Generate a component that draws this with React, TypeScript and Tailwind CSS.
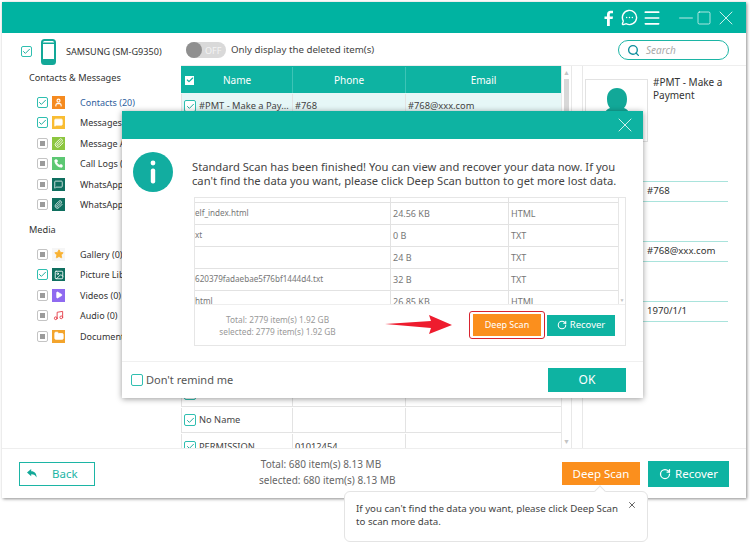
import React from "react";
import { Check, Folder, Image, Menu, MessageCircleMore, MessageSquare, Minus, Music, Paperclip, Phone, Play, RotateCw, Search, Square, Star, User, X } from "lucide-react";

const CheckBox = ({ state, size = "small" }: { state: "on" | "mixed" | "off"; size?: "small" | "large" }) => {
  const box = size === "large" ? "size-[12px]" : "size-[11px]";
  if (state === "on") {
    return (
      <span className={`${box} shrink-0 flex items-center justify-center rounded-[2px] border border-[#2fbfb0] bg-white`}>
        <Check size={9} strokeWidth={2.5} className="text-[#14a898]" />
      </span>
    );
  }
  if (state === "mixed") {
    return (
      <span className={`${box} shrink-0 flex items-center justify-center rounded-[2px] border border-[#c4c4c4] bg-white`}>
        <span className="size-[5px] bg-[#9b9b9b]" />
      </span>
    );
  }
  return <span className={`${box} shrink-0 rounded-[2px] border border-[#2fbfb0] bg-white`} />;
};

const contactItems = [
  { label: "Contacts (20)", state: "on", bg: "bg-[#f58a1f]", icon: <User size={9} strokeWidth={3} className="text-white" />, active: true },
  { label: "Messages (0)", state: "on", bg: "bg-[#f9bd33]", icon: <MessageSquare size={9} fill="white" className="text-white" /> },
  { label: "Message Attachments", state: "mixed", bg: "bg-[#8cc63f]", icon: <Paperclip size={10} className="text-white" /> },
  { label: "Call Logs (0)", state: "mixed", bg: "bg-[#5cc873]", icon: <Phone size={9} fill="white" className="text-white" /> },
  { label: "WhatsApp (0)", state: "mixed", bg: "bg-[#0f6f5f]", icon: <MessageSquare size={9} className="text-white" /> },
  { label: "WhatsApp Attachments", state: "mixed", bg: "bg-[#0f6f5f]", icon: <Paperclip size={9} className="text-white" /> },
] as const;

const mediaItems = [
  { label: "Gallery (0)", state: "mixed", bg: "bg-[#f6f6f6]", icon: <Star size={10} fill="#f9b233" className="text-[#f9b233]" /> },
  { label: "Picture Library", state: "on", bg: "bg-[#0f6f5f]", icon: <Image size={10} className="text-white" /> },
  { label: "Videos (0)", state: "mixed", bg: "bg-[#8f6af0]", icon: <Play size={8} fill="white" className="text-white" /> },
  { label: "Audio (0)", state: "mixed", bg: "bg-white", icon: <Music size={11} className="text-[#e5404a]" /> },
  { label: "Documents (0)", state: "mixed", bg: "bg-[#f3a42c]", icon: <Folder size={10} fill="white" className="text-white" /> },
] as const;

const SideRow = ({ item }: { item: { label: string; state: "on" | "mixed"; bg: string; icon: React.ReactNode; active?: boolean } }) => (
  <div className="flex h-[20.5px] items-center">
    <div className="flex w-[15px] shrink-0"><CheckBox state={item.state} /></div>
    <div className={`flex size-[13px] shrink-0 items-center justify-center ${item.bg}`}>{item.icon}</div>
    <span className={`ml-[15px] whitespace-nowrap text-[9px] ${item.active ? "text-[#2f5f9e]" : "text-[#333]"}`}>{item.label}</span>
  </div>
);

const contactRows = [
  { name: "#PMT - Make a Pay...", phone: "#768", email: "#768@xxx.com", selected: true },
  ...Array.from({ length: 10 }, () => ({ name: "", phone: "", email: "", selected: false })),
  { name: "", phone: "(...)", email: "", selected: false },
  { name: "No Name", phone: "", email: "", selected: false },
  { name: "PERMISSION", phone: "01012454", email: "", selected: false },
];

const fileRows = [
  { name: "", size: "", type: "", height: "h-[6px]" },
  { name: "elf_index.html", size: "24.56 KB", type: "HTML", height: "h-[22px]" },
  { name: "xt", size: "0 B", type: "TXT", height: "h-[22px]" },
  { name: "", size: "24 B", type: "TXT", height: "h-[22px]" },
  { name: "620379fadaebae5f76bf1444d4.txt", size: "32 B", type: "TXT", height: "h-[22px]" },
  { name: "html", size: "26.85 KB", type: "HTML", height: "h-[22px]" },
];

const fieldRows = ["#768", "#768@xxx.com", "1970/1/1"];

export default function App() {
  return (
    <div className="relative h-[545px] w-[750px] overflow-hidden bg-white font-['Noto_Sans',sans-serif] text-[#333]">
      <div className="ml-[2px] mt-[2px] flex h-[496px] w-[744px] flex-col bg-white shadow-[1px_1px_3px_rgba(0,0,0,0.45)]">
        <div className="flex h-[31px] shrink-0 items-center justify-end bg-[#00b3a1] pr-[8px] text-white">
          <svg width="10" height="16" viewBox="0 0 10 16" className="mr-[7px]">
            <path d="M3 16V9H0.5V6.5H3V4.5C3 2 4.5 0.8 6.5 0.8H9V3.2H7.2C6.2 3.2 5.8 3.7 5.8 4.6V6.5H9L8.6 9H5.8V16Z" fill="white" />
          </svg>
          <MessageCircleMore size={17} className="mr-[4px]" />
          <Menu size={20} className="mr-[13px]" />
          <Minus size={22} strokeWidth={0.8} className="mr-[-1px]" />
          <Square size={16} strokeWidth={1} className="mr-[2px]" />
          <X size={24} strokeWidth={0.8} />
        </div>

        <div className="flex min-h-0 flex-1">
          <aside className="w-[179px] shrink-0">
            <div className="flex h-[33px] items-center pl-[19px] pt-[4px]">
              <CheckBox state="on" />
              <svg width="15" height="26" viewBox="0 0 15 26" className="ml-[9px]">
                <rect x="1" y="1" width="13" height="24" rx="2.5" fill="none" stroke="#12a898" strokeWidth="2" />
                <rect x="1" y="3.5" width="13" height="1.5" fill="#12a898" />
                <rect x="1" y="20" width="13" height="5" rx="1.5" fill="#12a898" />
              </svg>
              <span className="ml-[10px] whitespace-nowrap text-[9.1px] text-[#333]">SAMSUNG (SM-G9350)</span>
            </div>
            <div className="pl-[27px] pt-[4px] text-[9.2px] leading-[16px]">Contacts &amp; Messages</div>
            <div className="pl-[35px] pt-[6px]">
              {contactItems.map((item) => <SideRow key={item.label} item={item} />)}
            </div>
            <div className="pl-[27px] pt-[7px] text-[9.2px] leading-[16px]">Media</div>
            <div className="pl-[35px] pt-[6px]">
              {mediaItems.map((item) => <SideRow key={item.label} item={item} />)}
            </div>
          </aside>

          <div className="flex min-w-0 flex-1 flex-col">
            <div className="flex h-[33px] shrink-0 items-center border-b border-[#eeeeee] pl-[5px] pr-[17px] pt-[2px]">
              <div className="flex h-[16px] w-[40px] items-center rounded-full bg-[#d9d9d9]">
                <span className="size-[16px] rounded-full bg-[#8f8f8f]" />
                <span className="ml-[3px] text-[9px] leading-none text-[#f4f4f4]">OFF</span>
              </div>
              <span className="ml-[5px] text-[9.7px] text-[#444]">Only display the deleted item(s)</span>
              <div className="ml-auto flex h-[20px] w-[111px] items-center rounded-full border border-[#1cb5a5] pl-[8px]">
                <Search size={13} strokeWidth={2.5} className="text-[#0d8f9c]" />
                <span className="ml-[6px] text-[10px] italic text-[#aaa]">Search</span>
              </div>
            </div>

            <div className="flex min-h-0 flex-1">
              <div className="flex w-[380px] shrink-0 flex-col overflow-hidden">
                <div className="flex h-[27px] shrink-0 bg-[#0eb3a2] pt-[1px] text-[10px] text-white">
                  <div className="flex w-[112px] items-center border-r border-[#3dc4b6] pl-[4px]">
                    <span className="flex size-[9px] items-center justify-center bg-white"><Check size={8} strokeWidth={3.5} className="text-[#0eb3a2]" /></span>
                    <span className="ml-[29px]">Name</span>
                  </div>
                  <div className="flex w-[113px] items-center justify-center border-r border-[#3dc4b6]">Phone</div>
                  <div className="flex flex-1 items-center justify-center">Email</div>
                </div>
                {contactRows.map((row, i) => (
                  <div key={i} className={`flex h-[26.2px] shrink-0 border-b border-[#e3e3e3] pt-[1px] text-[9.3px] text-[#444] ${row.selected ? "bg-[#e6f7f7]" : "bg-white"}`}>
                    <div className="flex w-[112px] items-center border-r border-l border-[#e3e3e3] pl-[2px]">
                      <CheckBox state="on" size="large" />
                      <span className="ml-[3px] whitespace-nowrap">{row.name}</span>
                    </div>
                    <div className="flex w-[113px] items-center border-r border-[#e3e3e3] pl-[2px]">{row.phone}</div>
                    <div className="flex flex-1 items-center pl-[2px]">{row.email}</div>
                  </div>
                ))}
              </div>

              <div className="flex w-[11px] shrink-0 flex-col items-center border-x border-[#e8e8e8] text-[#c4c4c4]">
                <span className="mt-[3px] text-[7px] leading-none">▲</span>
                <span className="mt-[3px] h-[50px] w-[5px] bg-[#d8d8d8]" />
                <span className="mb-[3px] mt-auto text-[7px] leading-none">▼</span>
              </div>
              <div className="w-[11px] shrink-0 border-r border-[#e8e8e8]" />

              <div className="min-w-0 flex-1 pl-[2px] pr-[18px] pt-[13px]">
                <div className="flex">
                  <div className="flex size-[63px] shrink-0 justify-center border border-[#e2e2e2] pt-[6px]">
                    <svg width="28" height="40" viewBox="0 0 28 40"><path d="M14 2c6 0 10 4 10 11 0 4-1 7-3 9 3 1 5 3 5 6 0 3-5 6-12 6S2 31 2 28c0-3 2-5 5-6-2-2-3-5-3-9C4 6 8 2 14 2z" fill="#12a898" /></svg>
                  </div>
                  <div className="ml-[5px] mt-[-3px] text-[10px] leading-[13px]">#PMT - Make a Payment</div>
                </div>
                <div className="pt-[39px]">
                  {fieldRows.map((value, i) => (
                    <div key={i} className={`flex h-[21px] items-center border-y border-[#a9e3dc] pl-[62px] text-[9.6px] ${i === 0 ? "" : "mt-[39px]"}`}>{value}</div>
                  ))}
                </div>
              </div>
            </div>
          </div>
        </div>

        <div className="flex h-[50px] shrink-0 items-center border-t border-[#eeeeee] pl-[17px] pr-[17px]">
          <div className="flex h-[24px] w-[76px] items-center border border-[#1cb5a5] pl-[7px] text-[11.5px] text-[#1cb5a5]">
            <svg width="10" height="9" viewBox="0 0 10 9"><path d="M0 3.5 L4.2 0 V2.2 C7.8 2.2 9.6 4.6 9.6 8.6 C8.6 6.4 7 5.2 4.2 5.2 V7.2 Z" fill="#12a898" /></svg>
            <span className="ml-[15px]">Back</span>
          </div>
          <div className="mb-[4px] ml-[164px] w-[124px] text-center text-[10px] leading-[16px] whitespace-nowrap text-[#666]">
            <div>Total: 680 item(s) 8.13 MB</div>
            <div>selected: 680 item(s) 8.13 MB</div>
          </div>
          <div className="ml-auto flex h-[23px] w-[78px] items-center justify-center bg-[#fb8f1d] text-[11.5px] text-white">Deep Scan</div>
          <div className="ml-[8px] flex h-[26px] w-[81px] items-center justify-center gap-[4px] bg-[#0eb3a2] text-[11.5px] text-white">
            <RotateCw size={12} strokeWidth={2.5} />
            Recover
          </div>
        </div>
      </div>

      <div className="absolute left-[122px] top-[111px] flex h-[287px] w-[521px] flex-col bg-white shadow-[0_1px_6px_rgba(0,0,0,0.4)]">
        <div className="flex h-[28px] shrink-0 items-center justify-end bg-[#0eb3a2] pr-[6px] text-white">
          <X size={24} strokeWidth={0.8} />
        </div>
        <div className="flex min-h-0 flex-1 flex-col border-b border-[#f0f0f0]">
          <div className="flex h-[58px] shrink-0">
            <div className="ml-[11px] mt-[13px] flex size-[40px] shrink-0 items-center justify-center rounded-full bg-[#12ada0]">
              <svg width="6" height="24" viewBox="0 0 6 24"><circle cx="3" cy="3" r="2.4" fill="white" /><rect x="0.8" y="8.5" width="4.4" height="15" rx="2" fill="white" /></svg>
            </div>
            <p className="ml-[19px] mt-[21px] w-[440px] whitespace-nowrap text-[11.2px] leading-[14px] text-[#444]">
              Standard Scan has been finished! You can view and recover your data now. If you<br />
              can't find the data you want, please click Deep Scan button to get more lost data.
            </p>
          </div>
          <div className="ml-[72px] flex h-[149px] w-[432px] shrink-0 flex-col border border-t-0 border-[#e6e6e6]">
            <div className="flex h-[108px] shrink-0 overflow-hidden border-b border-[#eeeeee] shadow-[inset_0_1px_0_#e6e6e6]">
              <div className="flex-1">
                {fileRows.map((row, i) => (
                  <div key={i} className={`flex ${row.height} border-b border-[#e2e2e2] text-[9px] text-[#777]`}>
                    <div className="flex w-[196px] items-center border-r border-[#e2e2e2] text-[8.1px] whitespace-nowrap">{row.name}</div>
                    <div className="flex w-[118px] items-center border-r border-[#e2e2e2] pl-[2px]">{row.size}</div>
                    <div className="flex flex-1 items-center pl-[2px]">{row.type}</div>
                  </div>
                ))}
              </div>
              <div className="flex w-[7px] shrink-0 flex-col items-center justify-end border-l border-[#e6e6e6] text-[#c4c4c4]">
                <span className="text-[5px] leading-[8px]">▼</span>
              </div>
            </div>
            <div className="relative flex flex-1 items-center">
              <div className="mt-[2px] w-[164px] pl-[1px] text-center text-[8.3px] leading-[12px] whitespace-nowrap text-[#999]">
                <div>Total: 2779 item(s) 1.92 GB</div>
                <div>selected: 2779 item(s) 1.92 GB</div>
              </div>
              <svg width="68" height="20" viewBox="0 0 68 20" className="ml-[26px]">
                <path d="M0 9 L46 6 L44 0 L67 10 L44 19 L46 13 Z" fill="#ee1c2e" />
              </svg>
              <div className="ml-[16px] flex h-[28px] w-[76px] items-center justify-center rounded-[3px] border border-[#d8232f]">
                <div className="flex h-[22px] w-[68px] items-center justify-center bg-[#fb8f1d] text-[9px] text-white">Deep Scan</div>
              </div>
              <div className="ml-[2px] flex h-[21px] w-[68px] items-center justify-center gap-[3px] bg-[#0eb3a2] text-[9.5px] text-white">
                <RotateCw size={10} strokeWidth={2.5} />
                Recover
              </div>
            </div>
          </div>
        </div>
        <div className="flex h-[36px] shrink-0 items-center pl-[9px] pr-[17px]">
          <CheckBox state="off" size="large" />
          <span className="ml-[3px] text-[11px] text-[#555]">Don't remind me</span>
          <div className="ml-auto flex h-[24px] w-[78px] items-center justify-center bg-[#0eb3a2] text-[12px] text-white">OK</div>
        </div>
      </div>

      <div className="absolute left-[344px] top-[491px] h-[51px] w-[304px] rounded-[6px] border border-[#e4e4e4] bg-white pl-[11px] pt-[10px] text-[9.7px] leading-[13px] text-[#444]">
        <span className="absolute left-[251px] top-[-5px] size-[8px] rotate-45 border-l border-t border-[#e4e4e4] bg-white" />
        <X size={10} strokeWidth={2} className="absolute right-[10px] top-[8px] text-[#444]" />
        <p className="whitespace-nowrap">If you can't find the data you want, please click Deep Scan<br />to scan more data.</p>
      </div>
    </div>
  );
}
